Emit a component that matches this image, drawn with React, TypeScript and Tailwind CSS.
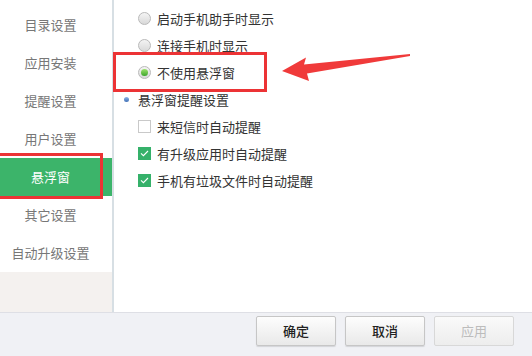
import React from 'react';

const menu = ['目录设置', '应用安装', '提醒设置', '用户设置', '悬浮窗', '其它设置', '自动升级设置'];

function Radio({ checked }: { checked?: boolean }) {
  return (
    <span className="flex h-[13px] w-[13px] shrink-0 items-center justify-center rounded-full border border-[#b9b9b9] bg-gradient-to-b from-[#f4f4f4] to-[#d9d9d9]">
      {checked && (
        <span className="h-[7px] w-[7px] rounded-full bg-gradient-to-b from-[#9be36a] to-[#3aa52c]" />
      )}
    </span>
  );
}

function Check({ checked }: { checked?: boolean }) {
  if (!checked) {
    return <span className="h-[13px] w-[13px] shrink-0 border border-[#c9c9c9] bg-white" />;
  }
  return (
    <span className="flex h-[13px] w-[13px] shrink-0 items-center justify-center bg-[#35b16a]">
      <svg width="9" height="7" viewBox="0 0 9 7" fill="none">
        <path d="M1 3.4 L3.4 5.7 L8 1" stroke="white" strokeWidth="1.1" />
      </svg>
    </span>
  );
}

export default function App() {
  return (
    <div
      className="relative flex h-[356px] w-[532px] flex-col overflow-hidden bg-white text-[13px]"
      style={{ fontFamily: '"Noto Sans CJK SC", "Noto Sans", sans-serif' }}
    >
      <div className="flex h-[312px]">
        {/* sidebar */}
        <div className="flex w-[114px] flex-col border-r-2 border-[#d7dfe4]">
          <div className="bg-white pt-[6px]">
            {menu.map((m) => (
              <div
                key={m}
                className={
                  m === '悬浮窗'
                    ? 'flex h-[38px] items-center justify-center bg-[#3cb46a] pr-[11px] text-white'
                    : 'flex h-[38px] items-center justify-center pr-[11px] text-[#777]'
                }
              >
                {m}
              </div>
            ))}
          </div>
          <div className="flex-1 bg-[#f4f1ef]" />
        </div>

        {/* content */}
        <div className="flex-1 pt-[5px] pl-[24px] text-[#333]">
          <div className="flex h-[27px] items-center gap-[6px]">
            <Radio />
            <span>启动手机助手时显示</span>
          </div>
          <div className="flex h-[27px] items-center gap-[6px]">
            <Radio />
            <span>连接手机时显示</span>
          </div>
          <div className="flex h-[27px] items-center gap-[6px]">
            <Radio checked />
            <span>不使用悬浮窗</span>
          </div>
          <div className="-ml-[14px] flex h-[27px] items-center gap-[9px]">
            <span className="h-[5px] w-[5px] rounded-full bg-gradient-to-b from-[#8fb4e6] to-[#3f6fb5]" />
            <span>悬浮窗提醒设置</span>
          </div>
          <div className="flex h-[27px] items-center gap-[6px]">
            <Check />
            <span>来短信时自动提醒</span>
          </div>
          <div className="flex h-[27px] items-center gap-[6px]">
            <Check checked />
            <span>有升级应用时自动提醒</span>
          </div>
          <div className="flex h-[27px] items-center gap-[6px]">
            <Check checked />
            <span>手机有垃圾文件时自动提醒</span>
          </div>
        </div>
      </div>

      {/* bottom buttons */}
      <div className="flex flex-1 items-start justify-end gap-[9px] border-t border-[#dedfe5] bg-[#f0f1f5] pt-[3px] pr-[18px]">
        <button className="h-[30px] w-[80px] rounded-[2px] border border-[#c6c6c6] bg-gradient-to-b from-[#fdfdfd] to-[#e9e9e9] text-[13px] font-medium text-[#222] shadow-[0_1px_1px_rgba(0,0,0,0.12)]">
          确定
        </button>
        <button className="h-[30px] w-[80px] rounded-[2px] border border-[#c6c6c6] bg-gradient-to-b from-[#fdfdfd] to-[#e9e9e9] text-[13px] font-medium text-[#222] shadow-[0_1px_1px_rgba(0,0,0,0.12)]">
          取消
        </button>
        <button className="h-[30px] w-[80px] rounded-[2px] border border-[#d8d8d8] bg-gradient-to-b from-[#fafafa] to-[#ededed] text-[13px] text-[#bcbcbc]">
          应用
        </button>
      </div>

      {/* annotations */}
      <div className="absolute left-[-4px] top-[153px] h-[46px] w-[107px] border-[3px] border-[#ec3335]" />
      <div className="absolute left-[113px] top-[52px] h-[40px] w-[154px] border-[3px] border-[#ec3335]" />
      <svg className="absolute left-0 top-0" width="532" height="356" viewBox="0 0 532 356">
        <polygon
          points="282,71 306,57.5 304,64.5 410,54 410,56 307,73.5 309,81"
          fill="#f03a3a"
        />
      </svg>
    </div>
  );
}
